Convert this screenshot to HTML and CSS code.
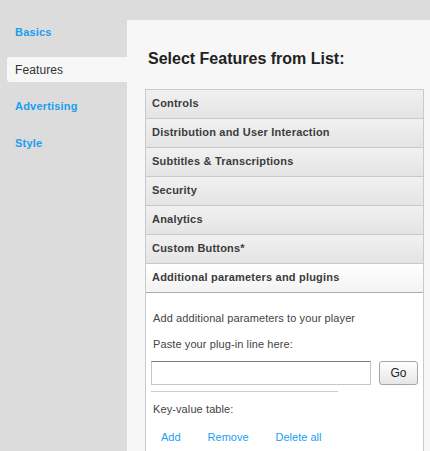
FILE: index.html
```html
<!DOCTYPE html>
<html>
<head>
<meta charset="utf-8">
<link rel="stylesheet" href="styles.css">
</head>
<body>
<div class="layout">
  <nav class="sidebar">
    <a class="nav-item">Basics</a>
    <a class="nav-item active">Features</a>
    <a class="nav-item">Advertising</a>
    <a class="nav-item">Style</a>
  </nav>
  <main class="main">
    <h1 class="title">Select Features from List:</h1>
    <div class="accordion">
      <div class="acc-header">Controls</div>
      <div class="acc-header">Distribution and User Interaction</div>
      <div class="acc-header">Subtitles &amp; Transcriptions</div>
      <div class="acc-header">Security</div>
      <div class="acc-header">Analytics</div>
      <div class="acc-header">Custom Buttons*</div>
      <div class="acc-header open">Additional parameters and plugins</div>
      <div class="acc-body">
        <p class="label first">Add additional parameters to your player</p>
        <p class="label">Paste your plug-in line here:</p>
        <div class="input-row">
          <input class="text-input" type="text">
          <button class="go-btn">Go</button>
        </div>
        <div class="divider"></div>
        <p class="label kv">Key-value table:</p>
        <div class="links">
          <a class="link">Add</a>
          <a class="link">Remove</a>
          <a class="link">Delete all</a>
        </div>
      </div>
    </div>
  </main>
</div>
</body>
</html>
```
FILE: styles.css
```css
* { box-sizing: border-box; }
html, body {
  margin: 0;
  padding: 0;
  height: 100%;
  background: #dcdcdc;
  font-family: "Liberation Sans", Arial, sans-serif;
  overflow: hidden;
}
.layout {
  display: flex;
  height: 451px;
}
.sidebar {
  width: 127px;
  flex: none;
  padding: 20px 0 0 7px;
  display: flex;
  flex-direction: column;
  gap: 12px;
}
.nav-item {
  display: flex;
  align-items: center;
  height: 25px;
  padding: 0 0 2px 8px;
  font-size: 11px;
  font-weight: bold;
  letter-spacing: 0.2px;
  color: #1a9ef2;
  border-radius: 3px 0 0 3px;
}
.nav-item.active {
  background: #f7f7f7;
  color: #333;
  font-weight: normal;
  font-size: 12px;
  letter-spacing: 0.1px;
  padding-bottom: 0;
}
.main {
  flex: 1;
  margin-top: 20px;
  background: #f7f7f7;
  padding: 29px 6px 0 18px;
  display: flex;
  flex-direction: column;
}
.title {
  margin: 0 0 20px 3px;
  font-size: 16px;
  line-height: 20px;
  font-weight: bold;
  color: #222;
}
.accordion {
  flex: 1;
  display: flex;
  flex-direction: column;
  border: 1px solid #cacaca;
  border-bottom: none;
}
.acc-header {
  height: 29px;
  padding: 0 0 2px 6px;
  display: flex;
  align-items: center;
  font-size: 11px;
  font-weight: bold;
  letter-spacing: 0.2px;
  color: #3c3c3c;
  background: linear-gradient(#f1f1f1, #e4e4e4);
  border-bottom: 1px solid #c9c9c9;
}
.acc-header.open {
  background: linear-gradient(#ffffff, #f3f3f3);
  border-bottom-color: #acacac;
}
.acc-body {
  flex: 1;
  background: #fff;
  padding: 18px 0 0 5px;
}
.label {
  margin: 0 0 0 2px;
  font-size: 11px;
  line-height: 14px;
  color: #444;
  letter-spacing: 0.1px;
}
.label + .label { margin-top: 12px; }
.input-row {
  display: flex;
  gap: 8px;
  margin-top: 10px;
}
.text-input {
  width: 220px;
  height: 24px;
  margin: 0;
  padding: 0 4px;
  background: #fff;
  border: 1px solid #c6c6c6;
  border-top-color: #7e7e7e;
  outline: none;
}
.go-btn {
  width: 39px;
  height: 24px;
  margin: 0;
  padding: 0;
  border: 1px solid #a6a6a6;
  border-radius: 3px;
  background: linear-gradient(#ffffff, #e6e6e6);
  font-family: "Liberation Sans", Arial, sans-serif;
  font-size: 12px;
  color: #222;
}
.divider {
  width: 187px;
  height: 1px;
  margin-top: 6px;
  background: #c6cfcf;
}
.label.kv { margin-top: 10px; }
.links {
  display: flex;
  gap: 27px;
  margin: 14px 0 0 10px;
}
.link {
  font-size: 11px;
  line-height: 14px;
  color: #1a9ef2;
}
```
